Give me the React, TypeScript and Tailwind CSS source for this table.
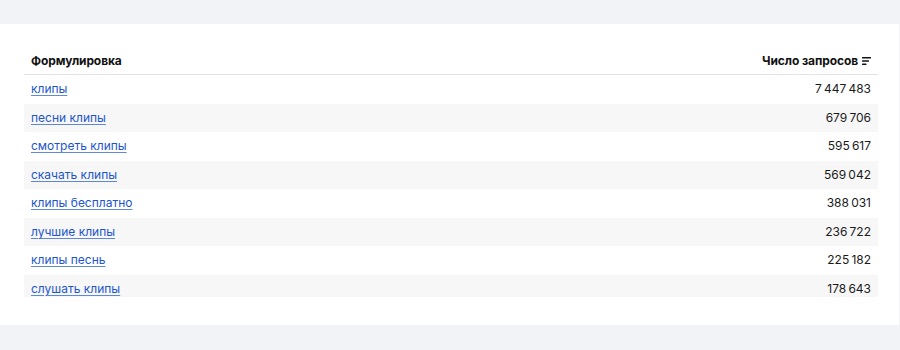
const ROWS = [
  { phrase: 'клипы', count: '7\u202F447\u202F483' },
  { phrase: 'песни клипы', count: '679\u202F706' },
  { phrase: 'смотреть клипы', count: '595\u202F617' },
  { phrase: 'скачать клипы', count: '569\u202F042' },
  { phrase: 'клипы бесплатно', count: '388\u202F031' },
  { phrase: 'лучшие клипы', count: '236\u202F722' },
  { phrase: 'клипы песнь', count: '225\u202F182' },
  { phrase: 'слушать клипы', count: '178\u202F643' },
]

function SortIcon() {
  return (
    <svg className="w-[9px] h-[8px] ml-[4px]" viewBox="0 0 9 8" fill="#111">
      <rect x="0" y="0" width="9" height="1.6" rx="0.5" />
      <rect x="0" y="3.2" width="7" height="1.6" rx="0.5" />
      <rect x="0" y="6.4" width="4.5" height="1.6" rx="0.5" />
    </svg>
  )
}

export default function App() {
  return (
    <div className="h-[350px] bg-[#f2f3f6] pt-[24px] pb-[25px] font-['Inter','Noto_Sans',sans-serif]">
      <div className="w-[899px] bg-white px-[24px] pt-[22px] pb-[28px]">
        <div className="w-[854px] h-[251px] overflow-hidden">
          {/* Header */}
          <div className="h-[29px] flex items-center justify-between px-[7px] pt-[2px] border-b border-[#e3e3e6] text-[12px] font-bold text-[#111] tracking-[-0.1px]">
            <span>Формулировка</span>
            <span className="flex items-center">
              Число запросов
              <SortIcon />
            </span>
          </div>

          {ROWS.map((row, i) => (
            <div
              key={row.phrase}
              className={`h-[28.5px] flex items-center justify-between px-[7px] text-[12px] ${
                i % 2 === 1 ? 'bg-[#f7f7f8]' : 'bg-white'
              }`}
            >
              <a href="#" className="text-[#1d56cc] underline underline-offset-2 decoration-1 decoration-[#1d56cc]/70">
                {row.phrase}
              </a>
              <span className="text-[#1a1a1a]">{row.count}</span>
            </div>
          ))}
        </div>
      </div>
    </div>
  )
}
